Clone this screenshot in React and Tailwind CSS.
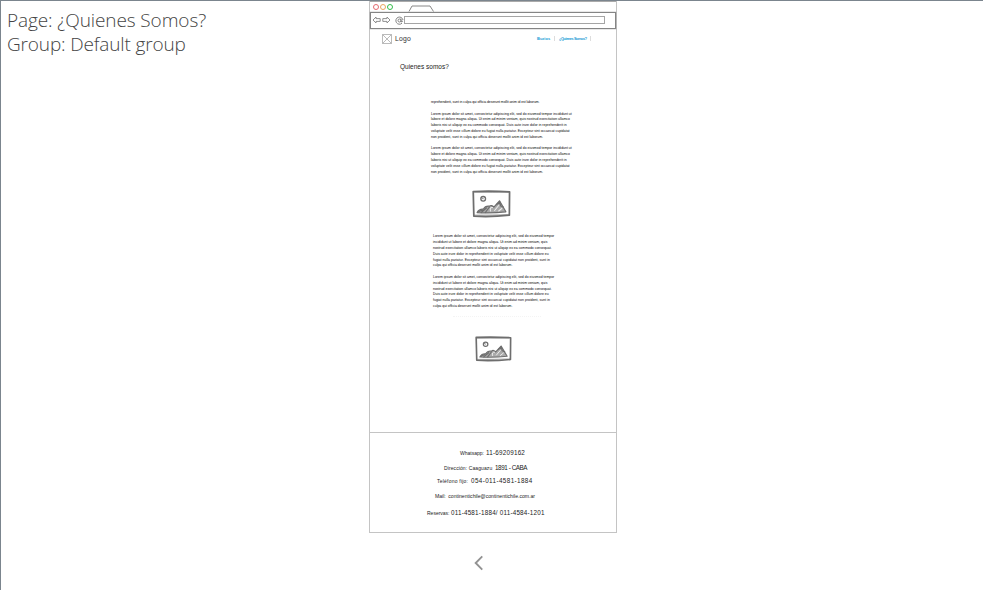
import React from 'react';

const WIDE = [
  ['w-[140px]', 'Lorem ipsum dolor sit amet, consectetur adipiscing elit, sed do eiusmod tempor incididunt ut'],
  ['w-[134px]', 'labore et dolore magna aliqua. Ut enim ad minim veniam, quis nostrud exercitation ullamco'],
  ['w-[132px]', 'laboris nisi ut aliquip ex ea commodo consequat. Duis aute irure dolor in reprehenderit in'],
  ['w-[138px]', 'voluptate velit esse cillum dolore eu fugiat nulla pariatur. Excepteur sint occaecat cupidatat'],
  ['w-[112px]', 'non proident, sunt in culpa qui officia deserunt mollit anim id est laborum.'],
];

const NARROW = [
  ['w-[121px]', 'Lorem ipsum dolor sit amet, consectetur adipiscing elit, sed do eiusmod tempor'],
  ['w-[111px]', 'incididunt ut labore et dolore magna aliqua. Ut enim ad minim veniam, quis'],
  ['w-[115px]', 'nostrud exercitation ullamco laboris nisi ut aliquip ex ea commodo consequat.'],
  ['w-[114px]', 'Duis aute irure dolor in reprehenderit in voluptate velit esse cillum dolore eu'],
  ['w-[117px]', 'fugiat nulla pariatur. Excepteur sint occaecat cupidatat non proident, sunt in'],
  ['w-[78px]', 'culpa qui officia deserunt mollit anim id est laborum.'],
];

const HAND = "font-['Liberation_Sans',sans-serif]";

function Paragraph({ lines, className = '' }) {
  return (
    <div className={className}>
      {lines.map(([width, text]) => (
        <p
          key={text}
          className={`${width} h-[5.8px] text-[3.4px] leading-[5.8px] tracking-[0.03px] whitespace-nowrap text-black [text-align-last:justify]`}
        >
          {text}
        </p>
      ))}
    </div>
  );
}

function Picture({ className }) {
  return (
    <svg className={className} viewBox="0 0 38 28" preserveAspectRatio="none" fill="none" stroke="#6e6e6e" strokeLinecap="round" strokeLinejoin="round">
      <path d="M1.2 1.5 Q19 .8 36.6 1.8 L36.4 25.2 Q19 27.2 1.8 26.2 Z" strokeWidth="1.7" />
      <path d="M2.4 2.3 Q20 2.5 36 2 M2.6 25.2 Q20 25.2 36 24.8" strokeWidth=".7" />
      <circle cx="10.9" cy="8.8" r="2.3" strokeWidth="1.3" />
      <path d="M9.2 7.8 Q9.6 9.2 11 8.8" strokeWidth=".8" />
      <path d="M5 22.6 Q7 18.8 11 19.2 Q13 15.5 17 16.2 Q19 14.4 21.3 17.2 L26.8 10.8 L33 21.8 Q19 23.6 5 22.6 Z" fill="#aaa" strokeWidth="1.2" />
      <path d="M6 22 L10 20 M9 22.5 L14 18 M13 22.5 L17 17 M24 14.5 L27 12 L28 16 L30.5 17" strokeWidth="1.2" />
      <path d="M18 21 Q17 17 20 17.5 M22 20.5 L26 15.5 M26 21 L29 18.5" stroke="#eee" strokeWidth="1" />
    </svg>
  );
}

function BrowserBar() {
  return (
    <div>
      <div className="flex h-[10.5px] items-end border-t border-[#aaa] pl-[3px]">
        <div className="flex gap-[1.5px] pb-[2px]">
          <span className="size-[5.5px] rounded-full border border-[#e46a70]" />
          <span className="size-[5.5px] rounded-full border border-[#eba65e]" />
          <span className="size-[5.5px] rounded-full border border-[#35bd4c]" />
        </div>
        <svg className="ml-[15px] h-[7px] w-[27px]" viewBox="0 0 27 7" fill="none" stroke="#888">
          <path d="M1 6.5 L4 1 H22 L25.5 6.5" />
        </svg>
      </div>
      <div className="flex h-[17px] items-center border border-[#858585] pl-[1px] shadow-[0_0_1px_#777]">
        <svg className="h-[8px] w-[19px]" viewBox="0 0 19 8" fill="none" stroke="#858585" strokeWidth=".9">
          <path d="M1 4 L4 1 V2.6 H8.2 V5.4 H4 V7 Z M18 4 L15 1 V2.6 H10.8 V5.4 H15 V7 Z" />
        </svg>
        <svg className="ml-[4px] h-[9px] w-[9px]" viewBox="0 0 9 9" fill="none" stroke="#777" strokeWidth=".9">
          <path d="M7 7.2 A3.6 3.6 0 1 1 8 4 M6 2.5 V6 L8 5" />
          <circle cx="4.5" cy="4.5" r="1.5" />
        </svg>
        <div className="h-[8px] w-[201px] border border-[#a5a5a5]" />
      </div>
    </div>
  );
}

function Contact({ label, value, labelW, valueW, className }) {
  return (
    <p className={`flex h-[10px] items-center leading-[10px] whitespace-nowrap text-[#222] ${className}`}>
      <span className={`${labelW} text-[5px]`}>{label}</span>
      <span className={valueW}>{value}</span>
    </p>
  );
}

export default function App() {
  return (
    <div className={`flex h-[590px] w-[983px] overflow-hidden border-t border-l border-[#7b858e] bg-white ${HAND}`}>
      <header className="w-[368px] shrink-0 pt-[7px] pl-[6px] font-['Open_Sans',sans-serif] text-[19px] leading-[24px] font-light whitespace-nowrap text-[#444]">
        <h1 className="tracking-[-0.1px]">Page: ¿Quienes Somos?</h1>
        <h2 className="tracking-[-0.15px]">Group: Default group</h2>
      </header>
      <main className="w-[248px] shrink-0">
        <section className="h-[532px] border-x border-b border-[#c4c4c4]">
          <BrowserBar />
          <nav className="flex h-[20px] items-center pl-[12px]">
            <svg className="size-[10px]" viewBox="0 0 10 10" fill="none" stroke="#aaa" strokeWidth=".8">
              <path d="M.5 .5 H9.5 V9.5 H.5 Z M.5 .5 L9.5 9.5 M9.5 .5 L.5 9.5" />
            </svg>
            <span className="ml-[3px] w-[18px] text-[6.8px] leading-[10px] tracking-[0.2px] text-[#333]">Logo</span>
            <div className="ml-[124px] flex items-center text-[4px] leading-[8px] font-bold whitespace-nowrap text-[#169bd5]">
              <span className="w-[14px]">Buzios</span>
              <span className="ml-[3px] h-[5px] w-px bg-[#ddd]" />
              <span className="ml-[4px] w-[27px] text-[3.8px] tracking-[-0.38px]">¿Quienes Somos?</span>
              <span className="ml-[4px] h-[5px] w-px bg-[#ddd]" />
            </div>
          </nav>
          <h3 className="mt-[12px] ml-[30px] h-[12px] w-[50px] text-[6.5px] leading-[12px] whitespace-nowrap text-[#222]">Quienes somos?</h3>
          <div className="mt-[27.5px] ml-[61px]">
            <p className="h-[5.8px] w-[107px] text-[3.4px] leading-[5.8px] tracking-[-0.03px] whitespace-nowrap text-black [text-align-last:justify]">
              reprehenderit, sunt in culpa qui officia deserunt mollit anim id est laborum.
            </p>
            <Paragraph lines={WIDE} className="mt-[5.8px]" />
            <Paragraph lines={WIDE} className="mt-[5.8px]" />
          </div>
          <Picture className="mt-[15px] ml-[102px] h-[28px] w-[39px]" />
          <div className="mt-[16px] ml-[63px]">
            <Paragraph lines={NARROW} />
            <Paragraph lines={NARROW} className="mt-[5.8px]" />
            <div className="mt-[6px] ml-[20px] w-[88px] border-t border-dotted border-[#f4f4f4]" />
          </div>
          <Picture className="mt-[19.5px] ml-[105px] h-[26px] w-[37px]" />
          <footer className="mt-[69.5px] border-t border-[#c4c4c4] pt-[15px] text-[6.3px]">
            <Contact label="Whatsapp:" value="11-69209162" labelW="w-[26px]" valueW="tracking-[0.22px]" className="ml-[90px]" />
            <Contact label="Dirección: Caaguazu" value="1891 - CABA" labelW="w-[51px] tracking-[0.1px]" valueW="tracking-[-0.42px]" className="mt-[5px] ml-[74px]" />
            <Contact label="Teléfono fijo:" value="054-011-4581-1884" labelW="w-[34px] tracking-[0.22px]" valueW="tracking-[0.4px]" className="mt-[3px] ml-[67px]" />
            <p className="mt-[5px] ml-[65px] h-[10px] w-[100px] text-[5.1px] leading-[10px] whitespace-nowrap text-[#222] [text-align-last:justify]">
              Mail: continentichile@continentichile.com.ar
            </p>
            <Contact label="Reservas:" value="011-4581-1884/ 011-4584-1201" labelW="w-[24px]" valueW="tracking-[0.2px]" className="mt-[7px] ml-[57px]" />
          </footer>
        </section>
        <svg className="mt-[22px] ml-[104px] h-[16px] w-[11px]" viewBox="0 0 11 17" fill="none" stroke="#929292" strokeWidth="2">
          <path d="M9.5 1.5 L2.5 8.5 L9.5 15.5" />
        </svg>
      </main>
    </div>
  );
}
